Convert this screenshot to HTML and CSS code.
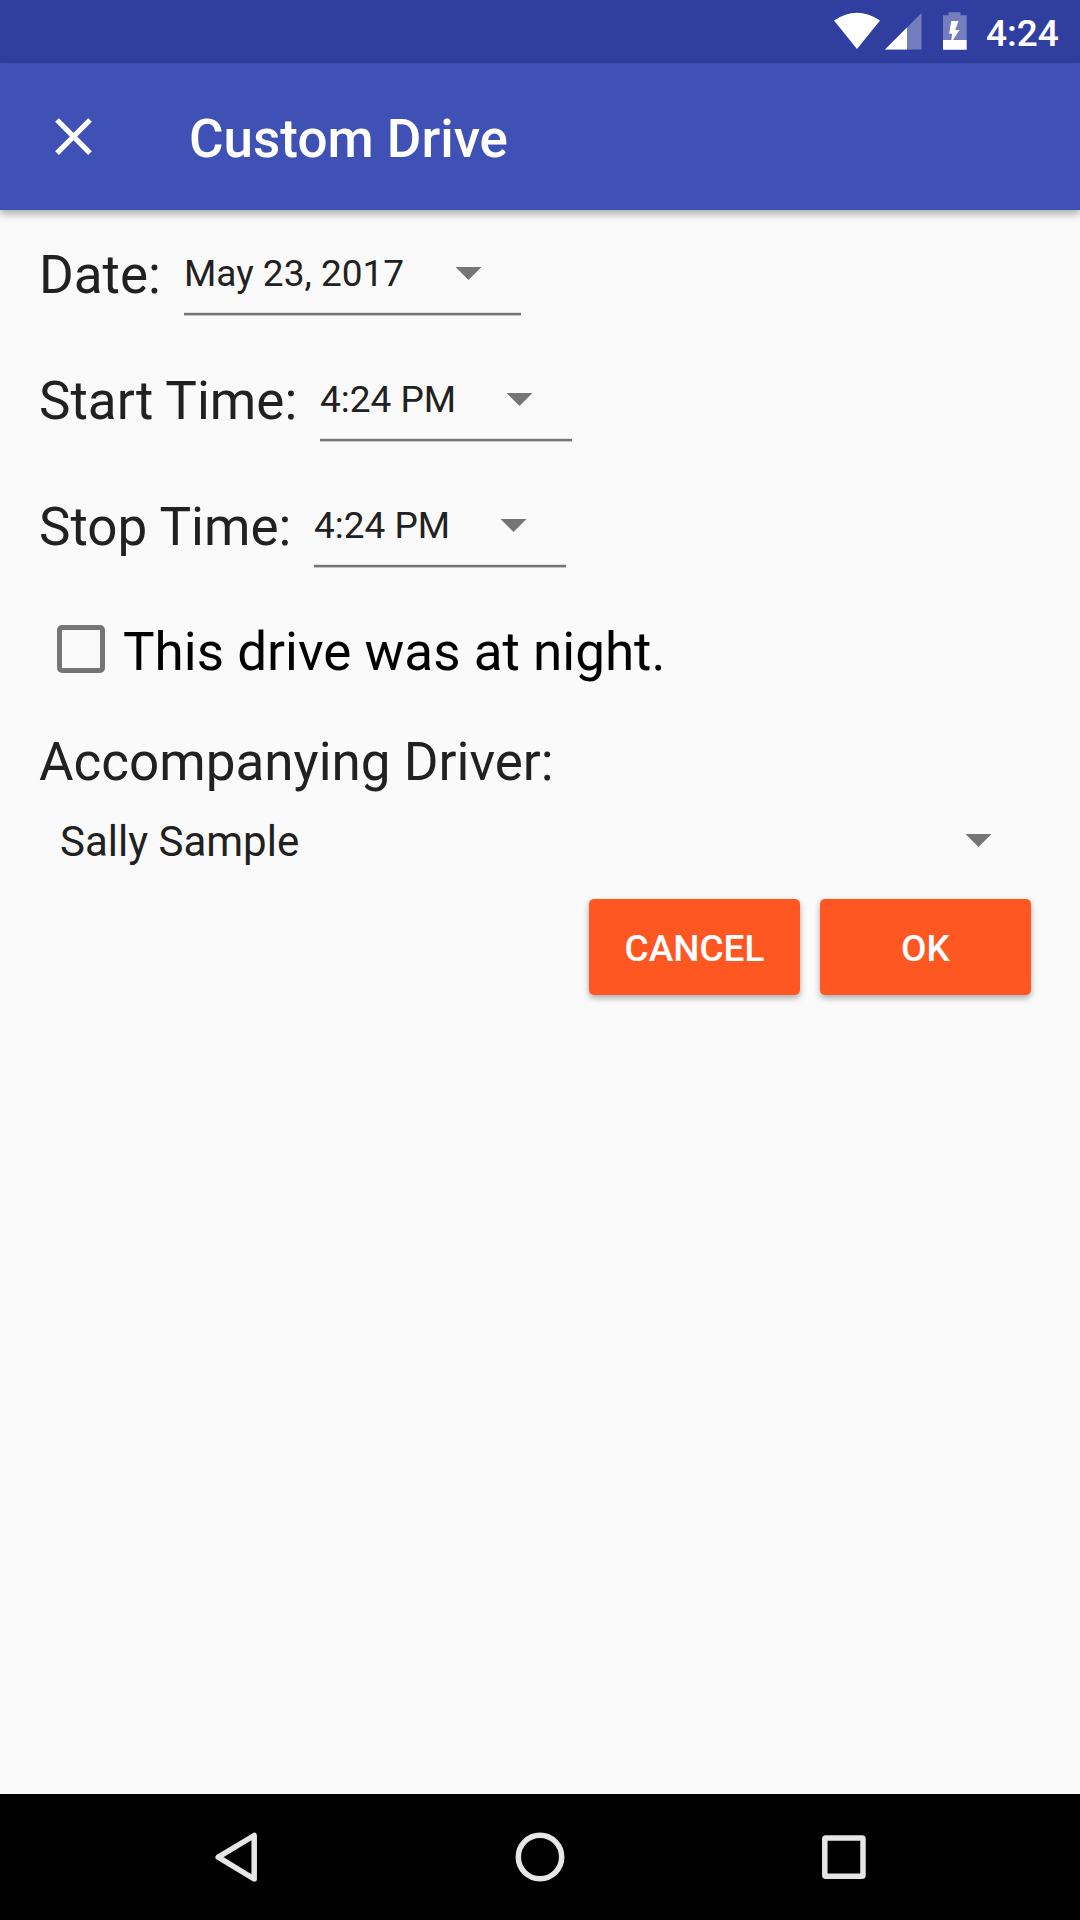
FILE: index.html
```html
<!DOCTYPE html>
<html lang="en">
<head>
<meta charset="utf-8">
<title>Custom Drive</title>
<link rel="stylesheet" href="styles.css">
</head>
<body>
<div class="screen">
  <div class="status">
    <svg class="status-icons" width="140" height="63" viewBox="0 0 140 63" fill="#fff">
      <path d="M7 20.500Q30 5 53 20.500L30 49z"/>
      <path d="M94.500 13v36.500H58z" opacity=".33"/>
      <path d="M80 27.500v22H58z"/>
      <path d="M116 15.300h5.500v-3h12v3h6.200V40H116z" opacity=".33"/>
      <path d="M116 40h8.300l.9-6.200h-3l2-12.800h7.300l-3.300 9h4.300L126 40h13.700v9.700H116z"/>
    </svg>
    <time class="clock">4:24</time>
  </div>
  <header class="toolbar">
    <svg class="close" width="38" height="38" viewBox="0 0 38 38" stroke="#fff" stroke-width="5.200"><path d="M2 2l33 33.200M35 2L2 35.200"/></svg>
    <h1 class="title">Custom Drive</h1>
  </header>
  <main class="form">
    <div class="row"><span class="label date-label">Date:</span><div class="picker date"><span>May 23, 2017</span><i class="caret"></i></div></div>
    <div class="row"><span class="label start-label">Start Time:</span><div class="picker time"><span>4:24 PM</span><i class="caret"></i></div></div>
    <div class="row"><span class="label stop-label">Stop Time:</span><div class="picker time"><span>4:24 PM</span><i class="caret"></i></div></div>
    <div class="night"><span class="box"></span><span class="night-text">This drive was at night.</span></div>
    <div class="label driver-label">Accompanying Driver:</div>
    <div class="driver"><span>Sally Sample</span><i class="caret"></i></div>
    <div class="actions"><button class="btn">CANCEL</button><button class="btn">OK</button></div>
  </main>
  <nav class="nav">
    <svg width="1080" height="126" viewBox="0 0 1080 126" fill="none" stroke="#e6e6e6" stroke-width="5.500" stroke-linejoin="round">
      <path d="M218.200 63.200L254.200 41.500V85z"/>
      <circle cx="540" cy="63" r="21.700"/>
      <rect x="824.800" y="44" width="38.200" height="38.200" rx="1"/>
    </svg>
  </nav>
</div>
</body>
</html>
```
FILE: styles.css
```css
* { box-sizing: border-box; }
body { margin: 0; font-family: Roboto, "Noto Sans", sans-serif; }
.screen { width: 1080px; height: 1920px; display: flex; flex-direction: column; background: #fafafa; color: #212121; overflow: hidden; }
.status { height: 63px; flex: none; background: #303f9f; display: flex; justify-content: flex-end; padding-right: 20px; gap: 19px; }
.clock { color: #fff; font-size: 37px; font-weight: 500; line-height: 67px; white-space: nowrap; width: 74px; }
.toolbar { height: 147px; flex: none; background: #3f51b5; display: flex; align-items: center; padding-left: 55px; box-shadow: 0 4px 8px rgba(0,0,0,.32); }
.close { flex: none; }
.title { margin: 4px 0 0 96px; color: #fff; font-size: 53px; font-weight: 500; line-height: 64px; white-space: nowrap; }
.form { flex: 1; padding: 2px 49px 0 39px; }
.row { height: 126px; display: flex; }
.label { font-size: 53px; line-height: 127px; white-space: nowrap; }
.date-label { width: 145px; }
.start-label { width: 281px; }
.stop-label { width: 275px; }
.picker { height: 104px; background: linear-gradient(#dcdedb 1px, #757575 1px 3px, #c4c7c3 3px) bottom / 100% 4px no-repeat; font-size: 37px; line-height: 123px; display: flex; justify-content: space-between; padding-right: 39.5px; white-space: nowrap; }
.caret { width: 26px; height: 13px; flex: none; background: #757575; clip-path: polygon(0 0, 100% 0, 50% 100%); }
.picker .caret { margin-top: 55px; }
.date { width: 337px; }
.time { width: 252px; }
.night { height: 124px; display: flex; align-items: center; padding-left: 18px; }
.box { width: 48px; height: 48px; border: 5px solid #757575; border-radius: 5px; flex: none; margin-top: -6px; }
.night-text { margin-left: 18px; font-size: 53px; color: #000; white-space: nowrap; line-height: 122px; }
.driver-label { line-height: 84px; padding-top: 6px; }
.driver { height: 75px; display: flex; justify-content: space-between; font-size: 42px; line-height: 75px; padding-left: 21px; }
.driver .caret { margin: 30px 39.5px 0 0; }
.actions { display: flex; justify-content: flex-end; gap: 20px; margin-top: 20px; }
.btn { width: 211px; height: 96px; border: 0; padding: 2px 0 0; border-radius: 5px; background: #ff5722; color: #fff; font: 500 37px Roboto, sans-serif; box-shadow: 0 3px 6px rgba(0,0,0,.32); }
.nav { height: 126px; flex: none; background: #000; }
.nav svg { display: block; }
```
